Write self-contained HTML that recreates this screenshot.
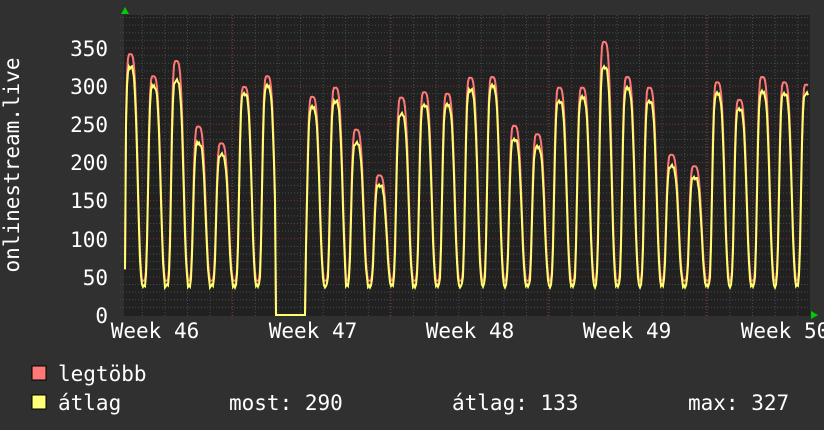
<!DOCTYPE html>
<html><head><meta charset="utf-8"><style>
html,body{margin:0;padding:0;background:#303030;}
svg{display:block;}
text{font-family:"DejaVu Sans Mono","Liberation Mono",monospace;fill:#fff;font-size:21px;}
</style></head><body>
<svg id="s" width="824" height="430" xmlns="http://www.w3.org/2000/svg">
<rect width="824" height="430" fill="#303030"/>
<rect x="124" y="15" width="686" height="301" fill="#212121"/>
<g id="grid"></g>
<polyline id="mx" fill="none" stroke="#ff7878" stroke-width="2"/>
<polyline id="av" fill="none" stroke="#ffff70" stroke-width="2"/>
<polygon points="121,14 129,14 125,7" fill="#0c0"/>
<polygon points="811,311 811,319 818,315" fill="#0c0"/>
<g text-anchor="end">
<text x="108" y="56">350</text><text x="108" y="94">300</text><text x="108" y="132">250</text>
<text x="108" y="170">200</text><text x="108" y="208">150</text><text x="108" y="247">100</text>
<text x="108" y="285">50</text><text x="108" y="323">0</text>
</g>
<g text-anchor="middle">
<text x="155" y="338">Week 46</text><text x="313" y="338">Week 47</text>
<text x="470" y="338">Week 48</text><text x="627" y="338">Week 49</text><text x="785" y="338">Week 50</text>
</g>
<text transform="translate(19,165) rotate(-90)" text-anchor="middle">onlinestream.live</text>
<rect x="32" y="366" width="14" height="14" fill="#ff7878" stroke="#000"/>
<rect x="32" y="395" width="14" height="14" fill="#ffff78" stroke="#000"/>
<text x="58" y="381">legtöbb</text>
<text x="58" y="410">átlag</text>
<text x="229" y="410">most: 290</text>
<text x="452" y="410">átlag: 133</text>
<text x="688" y="410">max: 327</text>
</svg>
<script>
var g=document.getElementById('grid'),h='';
for(var x=142.3;x<810;x+=22.6){h+='<line x1="'+x+'" y1="15" x2="'+x+'" y2="316" stroke="#4a4a4a" stroke-dasharray="1,2"/>';}
for(var x=232;x<810;x+=158){h+='<line x1="'+x+'" y1="15" x2="'+x+'" y2="320" stroke="#7a3030" stroke-dasharray="1,2"/>';}
for(var v=10;v<=390;v+=10){var y=315-v*0.7628;if(y<15)break;var red=v%50==0;h+='<line x1="120" y1="'+y+'" x2="810" y2="'+y+'" stroke="'+(red?'#7a3030':'#4a4a4a')+'" stroke-dasharray="1,2"/>';}
g.innerHTML=h;
var P=[[130,342,325],[153,313,300],[176,333,307],[198,247,225],[221,225,210],[244,299,290],[267,313,300],[290,0,0],[312,286,272],[335,298,280],[356,243,225],[379,183,170],[401,285,263],[424,292,275],[447,290,275],[470,311,295],[492,312,300],[514,248,230],[537,237,220],[559,298,280],[582,298,285],[604,358,325],[627,312,297],[649,298,280],[671,210,195],[694,195,180],[717,305,290],[739,282,270],[762,312,292],[784,305,290],[806,302,290]];
function val(x,k){var best=null,bd=1e9;for(var i=0;i<P.length;i++){var d=x-P[i][0];if(Math.abs(d)<Math.abs(bd)){bd=d;best=P[i];}}
if(x>=276&&x<=305)return 0;
var pk=best[k],tr=k==1?45:38;var w=bd<0?4.5:7;var q=Math.pow(Math.abs(bd)/w,2);var f=Math.exp(-q*q*0.5);var n=k==1?0:((x*7)%5-2);
return tr+(pk-tr)*f+n;}
function pts(k){var s='';for(var x=125;x<=808;x++){var v=val(x,k);if(x<=125)v=60;s+=x+','+(315-v*0.7628).toFixed(1)+' ';}return s;}
document.getElementById('mx').setAttribute('points',pts(1));
document.getElementById('av').setAttribute('points',pts(2));
</script>
</body></html>
